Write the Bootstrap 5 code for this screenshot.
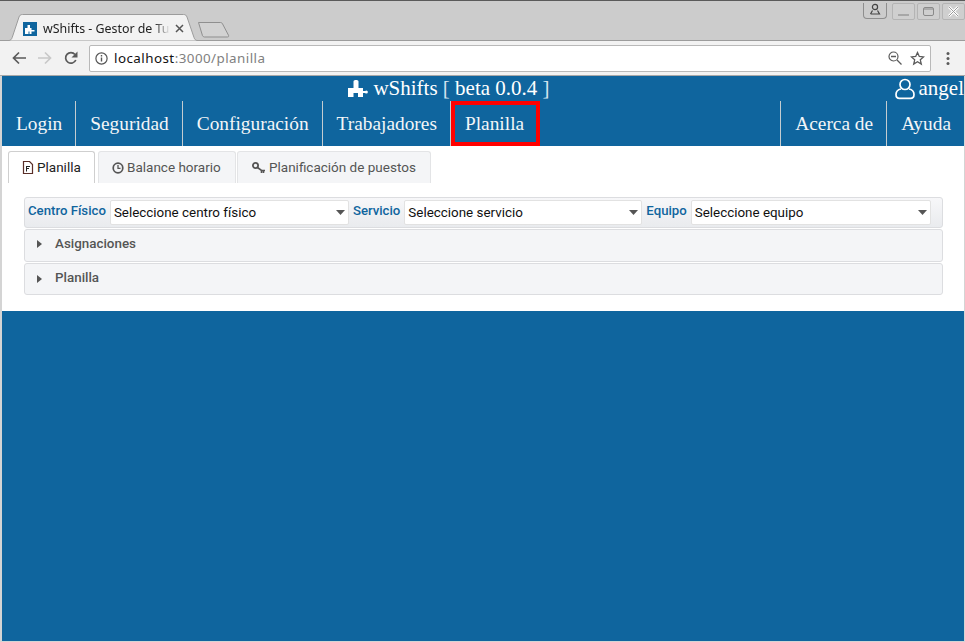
<!DOCTYPE html>
<html lang="es">
<head>
  <meta charset="UTF-8">
  <title>wShifts - Gestor de Turnos</title>
  <link href="https://cdn.jsdelivr.net/npm/bootstrap@5.3.0/dist/css/bootstrap.min.css" rel="stylesheet">
  <style>
    html, body { height: 100%; }
    body { background: #cdcdcd; overflow: hidden; font-family: "Roboto", sans-serif; }
    .win-shell { height: 642px; display: flex; flex-direction: column; border-top: 1px solid #5a5a5a; padding: 0 1px 1px 2px; background: #d4d4d4; }

    /* browser chrome */
    .tab-strip { height: 40px; margin: 0 -1px 0 -2px; background: #cccccc; border-bottom: 1px solid #9c9c9c; position: relative; }
    .browser-tab { position: absolute; left: 7px; top: 13px; width: 196px; height: 27px; }
    .tab-text { position: absolute; left: 43px; top: 17px; height: 22px; white-space: nowrap; font: 12.4px/22px "Noto Sans", sans-serif; color: #222; -webkit-mask-image: linear-gradient(to right, #000 88%, transparent); mask-image: linear-gradient(to right, #000 88%, transparent); }
    .tab-fav { position: absolute; left: 23px; top: 21px; }
    .tab-close { position: absolute; left: 175px; top: 23px; }
    .new-tab { position: absolute; left: 197px; top: 20px; }
    .win-btns { position: absolute; right: 0; top: 2px; display: flex; align-items: flex-start; }
    .win-user { width: 24px; height: 16px; border: 1px solid #8e8e8e; border-top: 0; border-radius: 0 0 4px 4px; margin-right: 5px; display: flex; justify-content: center; }
    .win-ctl { width: 23px; height: 17px; border: 1px solid #b4b4b4; border-radius: 2px; margin-right: 2px; display: flex; align-items: center; justify-content: center; background: #cfcfcf; }
    .win-ctl:last-child { margin-right: 0; }
    .tool-row { height: 35px; margin: 0 -1px 0 -2px; background: #f2f2f2; border-bottom: 1px solid #a8a8a8; display: flex; align-items: center; padding-left: 6px; }
    .tool-btn { width: 26px; display: flex; justify-content: center; flex: none; }
    .omni-box { width: 842px; height: 27px; margin-left: 5px; background: #fff; border: 1px solid #b9b9b9; border-radius: 2px; display: flex; align-items: center; padding: 0 5px 0 5px; font: 13.4px "Noto Sans", sans-serif; letter-spacing: .45px; }
    .omni-host { color: #111; margin-left: 6px; }
    .omni-path { color: #808080; }

    /* app header */
    .app-head { background: #0f659e; color: #fff; font-family: "Liberation Serif", serif; flex: none; }
    .head-top { height: 25px; position: relative; display: flex; justify-content: center; align-items: center; font-size: 21px; line-height: 25px; padding-right: 68px; }
    .head-top .gap-ico { margin-right: 5px; }
    .head-bracket { color: #d4e4ef; }
    .head-user { position: absolute; right: 0; top: 0; display: flex; align-items: center; gap: 4px; }
    .head-nav { height: 45px; display: flex; }
    .head-link { color: #f3f6f8; font-size: 19.36px; text-decoration: none; padding: 1px 13px 0 14px; display: flex; align-items: center; border-right: 1px solid #c4ccd0; height: 45px; }
    .head-link:hover { color: #fff; }
    .head-link-on { border: 4px solid #f00; padding: 0 12px 0 10px; }
    .head-link-none { border-right: 0; }
    .head-link-left { border-left: 1px solid #c4ccd0; }

    /* tabs */
    .page-body { background: #fff; height: 165px; flex: none; padding: 5px 21px 0 6px; }
    .page-tabs { border-bottom: 0; gap: 3px; font-size: 13.5px; height: 32px; flex-wrap: nowrap; }
    .page-tabs .nav-link { height: 32px; padding: 0 13px; display: flex; align-items: center; gap: 3px; color: #555; background: #f4f5f7; border: 1px solid #e3e4e6; border-bottom: 0; border-radius: 3px 3px 0 0; margin: 0; white-space: nowrap; }
    .page-tabs .nav-link.active { color: #222; background: #fff; border-color: #cfcfcf; }
    .tab-w1 { width: 87px; }
    .tab-w2 { width: 138px; }
    .page-tabs .tab-w3 { width: 194px; margin-left: -2px; padding-left: 14px; gap: 4px; }

    /* filters */
    .filter-wrap { margin: 14px 0 0 16px; }
    .filter-bar { height: 31px; border: 1px solid #dcdde0; border-radius: 3px; background: linear-gradient(#f7f7f9, #e9ebee); display: flex; align-items: center; padding: 0 0 0 3px; font-size: 13.2px; }
    .filter-lbl { color: #0f659e; font-weight: 500; white-space: nowrap; margin-top: -3px; }
    .filter-sel { height: 25px; padding: 0 3px; margin: 0 4px; font: 13.4px "Roboto", sans-serif; color: #111; border: 1px solid #e2e2e2; border-radius: 2px; background-image: url("data:image/svg+xml,%3csvg xmlns='http://www.w3.org/2000/svg' viewBox='0 0 9 5'%3e%3cpath d='M0 0h9L4.500 5z' fill='%23555'/%3e%3c/svg%3e"); background-position: right 3px center; background-size: 9px 5px; box-shadow: none; }
    .sel-a { width: 239px; }
    .sel-b { width: 238px; }
    .sel-c { width: 240px; }
    .fold-row { height: 32px; margin-top: 1px; border: 1px solid #dcdde0; border-radius: 3px; background: #f4f5f7; display: flex; align-items: center; padding: 0 0 1px 12px; font-size: 13.4px; font-weight: 500; color: #555; }
    .fold-row svg { margin-right: 13px; }
    .fold-tall { height: 33px; padding-bottom: 3px; }
    .blue-fill { flex: 1; background: #0f659e; }
  </style>
</head>
<body>
<div class="win-shell">
  <div class="tab-strip">
    <svg class="browser-tab" viewBox="0 0 196 27" width="196" height="27"><path d="M0 26.500h1.500c2 0 3-1 3.700-3L12 3c.6-1.600 1.500-2.500 3.500-2.500h161c2 0 2.900.9 3.500 2.500l7 20.500c.7 2 1.700 3 3.700 3H196" fill="#f2f2f2" stroke="#9c9c9c"/></svg>
    <svg class="tab-fav" width="14" height="14" viewBox="0 0 14 14"><rect width="14" height="14" fill="#0f659e"/><path d="M2 6h2.500V3h2.500v3h1.500v2h3v1.500h-3V12H6.500V9.500h-1V12H2z" fill="#fff"/></svg>
    <div class="tab-text">wShifts - Gestor de Tu</div>
    <svg class="tab-close" width="9" height="9" viewBox="0 0 9 9"><path d="M1 1l7 7M8 1L1 8" stroke="#555" stroke-width="1.500"/></svg>
    <svg class="new-tab" width="34" height="18" viewBox="0 0 34 18"><path d="M1.500 1.500h22c1 0 1.500.4 2 1.300l6 11.500c.5 1 .1 1.700-1 1.700h-23c-1 0-1.500-.5-2-1.300z" fill="#d2d2d2" stroke="#8f8f8f"/></svg>
    <div class="win-btns">
      <div class="win-user"><svg width="12" height="13" viewBox="0 0 12 13"><circle cx="6" cy="4" r="2.600" fill="none" stroke="#444" stroke-width="1.200"/><path d="M1.500 11h9l-2-3.500M3.500 7.500l-2 3.500" fill="none" stroke="#444" stroke-width="1.200"/></svg></div>
      <div class="win-ctl"><svg width="11" height="11" viewBox="0 0 11 11"><path d="M0 9h11" stroke="#9a9a9a" stroke-width="1.500"/></svg></div>
      <div class="win-ctl"><svg width="11" height="11" viewBox="0 0 11 11"><rect x=".5" y="1.500" width="10" height="8" rx="1.500" fill="none" stroke="#8a8a8a"/><path d="M1 3h9" stroke="#8a8a8a"/></svg></div>
      <div class="win-ctl"><svg width="11" height="11" viewBox="0 0 11 11"><path d="M1 1l9 9M10 1l-9 9" stroke="#fff" stroke-width="2.500"/><path d="M1 1l9 9M10 1l-9 9" stroke="#999" stroke-width="1"/></svg></div>
    </div>
  </div>

  <div class="tool-row">
    <div class="tool-btn"><svg width="14" height="14" viewBox="0 0 14 14"><path d="M14 7H2M7 1.500L1.500 7 7 12.500" fill="none" stroke="#5a5a5a" stroke-width="1.700"/></svg></div>
    <div class="tool-btn"><svg width="14" height="14" viewBox="0 0 14 14"><path d="M0 7h12M7 1.500L12.500 7 7 12.500" fill="none" stroke="#c8c8c8" stroke-width="1.700"/></svg></div>
    <div class="tool-btn"><svg width="14" height="14" viewBox="0 0 14 14"><path d="M11.800 9A5.300 5.300 0 1 1 11 3.500" fill="none" stroke="#5a5a5a" stroke-width="1.700"/><path d="M13.500 0.500v6h-6z" fill="#5a5a5a"/></svg></div>
    <div class="omni-box">
      <svg width="13" height="13" viewBox="0 0 13 13"><circle cx="6.500" cy="6.500" r="5.600" fill="none" stroke="#555" stroke-width="1.200"/><path d="M6.500 5.500v4M6.500 3v1.500" stroke="#555" stroke-width="1.400"/></svg>
      <span class="omni-host">localhost<span class="omni-path">:3000/planilla</span></span>
      <svg class="ms-auto" width="14" height="14" viewBox="0 0 14 14"><circle cx="5.500" cy="5.500" r="4.500" fill="none" stroke="#5a5a5a" stroke-width="1.200"/><path d="M3 5.500h5M9 9l4.500 4.500" stroke="#5a5a5a" stroke-width="1.300"/></svg>
      <svg class="ms-2" width="15" height="15" viewBox="0 0 15 15"><path d="M7.500 1.500l1.800 4 4.300.4-3.300 2.900 1 4.300-3.800-2.300-3.800 2.300 1-4.300L1.400 5.900l4.300-.4z" fill="none" stroke="#5a5a5a" stroke-width="1.300"/></svg>
    </div>
    <div class="tool-btn ms-1"><svg width="4" height="14" viewBox="0 0 4 14"><circle cx="2" cy="2.500" r="1.500" fill="#5a5a5a"/><circle cx="2" cy="7.500" r="1.500" fill="#5a5a5a"/><circle cx="2" cy="12.500" r="1.500" fill="#5a5a5a"/></svg></div>
  </div>

  <header class="app-head">
    <div class="head-top">
      <svg class="gap-ico" width="20" height="18" viewBox="0 0 20 18"><path d="M0 8h5.500V1.500C5.500.5 6.500 0 8 0s2.500.5 2.500 1.500V8H15v3h2v2h-2v4h-5v-4H5.500v4H0z" fill="#fff"/><circle cx="18.300" cy="12" r="1.600" fill="#fff"/></svg>
      <span>wShifts <span class="head-bracket">[</span> beta 0.0.4 <span class="head-bracket">]</span></span>
      <div class="head-user">
        <svg width="20" height="22" viewBox="0 0 20 22"><circle cx="10" cy="6.500" r="5" fill="none" stroke="#fff" stroke-width="1.700"/><path d="M6 11c-3 .6-5 3-5 5.500 0 2.500 1.500 3.900 3.500 3.900h11c2 0 3.500-1.400 3.500-3.900 0-2.500-2-4.900-5-5.500" fill="none" stroke="#fff" stroke-width="1.700"/></svg>
        <span>angel</span>
      </div>
    </div>
    <nav class="head-nav">
      <a class="head-link" href="#">Login</a>
      <a class="head-link" href="#">Seguridad</a>
      <a class="head-link" href="#">Configuración</a>
      <a class="head-link" href="#">Trabajadores</a>
      <a class="head-link head-link-on" href="#">Planilla</a>
      <a class="head-link head-link-left ms-auto" href="#">Acerca de</a>
      <a class="head-link head-link-none" href="#">Ayuda</a>
    </nav>
  </header>

  <main class="page-body">
    <ul class="nav nav-tabs page-tabs">
      <li class="nav-item"><a class="nav-link active tab-w1" href="#">
        <svg width="12" height="13" viewBox="0 0 12 13"><path d="M1.500.500h6l3 3v9h-9z" fill="none" stroke="#5a2f28" stroke-width="1.200"/><path d="M4 5.500h4M4 7.500h3M4.500 5v5.500" stroke="#222"/></svg>Planilla</a></li>
      <li class="nav-item"><a class="nav-link tab-w2" href="#">
        <svg width="12" height="12" viewBox="0 0 12 12"><circle cx="6" cy="6" r="4.800" fill="none" stroke="#555" stroke-width="1.700"/><path d="M6 3v3.300h2.500" fill="none" stroke="#555" stroke-width="1.300"/></svg>Balance horario</a></li>
      <li class="nav-item"><a class="nav-link tab-w3" href="#">
        <svg width="13" height="12" viewBox="0 0 13 12"><circle cx="3.500" cy="3.500" r="2.600" fill="none" stroke="#555" stroke-width="1.800"/><path d="M5.500 5.500L9.500 8.500h3.500M9.500 8.500v2.500M11.500 9v2" fill="none" stroke="#555" stroke-width="1.600"/></svg>Planificación de puestos</a></li>
    </ul>
    <div class="filter-wrap">
      <form class="filter-bar">
        <label class="filter-lbl">Centro Físico</label>
        <select class="form-select filter-sel sel-a"><option>Seleccione centro físico</option></select>
        <label class="filter-lbl">Servicio</label>
        <select class="form-select filter-sel sel-b"><option>Seleccione servicio</option></select>
        <label class="filter-lbl">Equipo</label>
        <select class="form-select filter-sel sel-c"><option>Seleccione equipo</option></select>
      </form>
      <div class="fold-row fold-tall"><svg width="5" height="8" viewBox="0 0 5 8"><path d="M0 0l5 4-5 4z" fill="#555"/></svg>Asignaciones</div>
      <div class="fold-row"><svg width="5" height="8" viewBox="0 0 5 8"><path d="M0 0l5 4-5 4z" fill="#555"/></svg>Planilla</div>
    </div>
  </main>
  <div class="blue-fill"></div>
</div>
<script src="https://cdn.jsdelivr.net/npm/bootstrap@5.3.0/dist/js/bootstrap.bundle.min.js"></script>
</body>
</html>
